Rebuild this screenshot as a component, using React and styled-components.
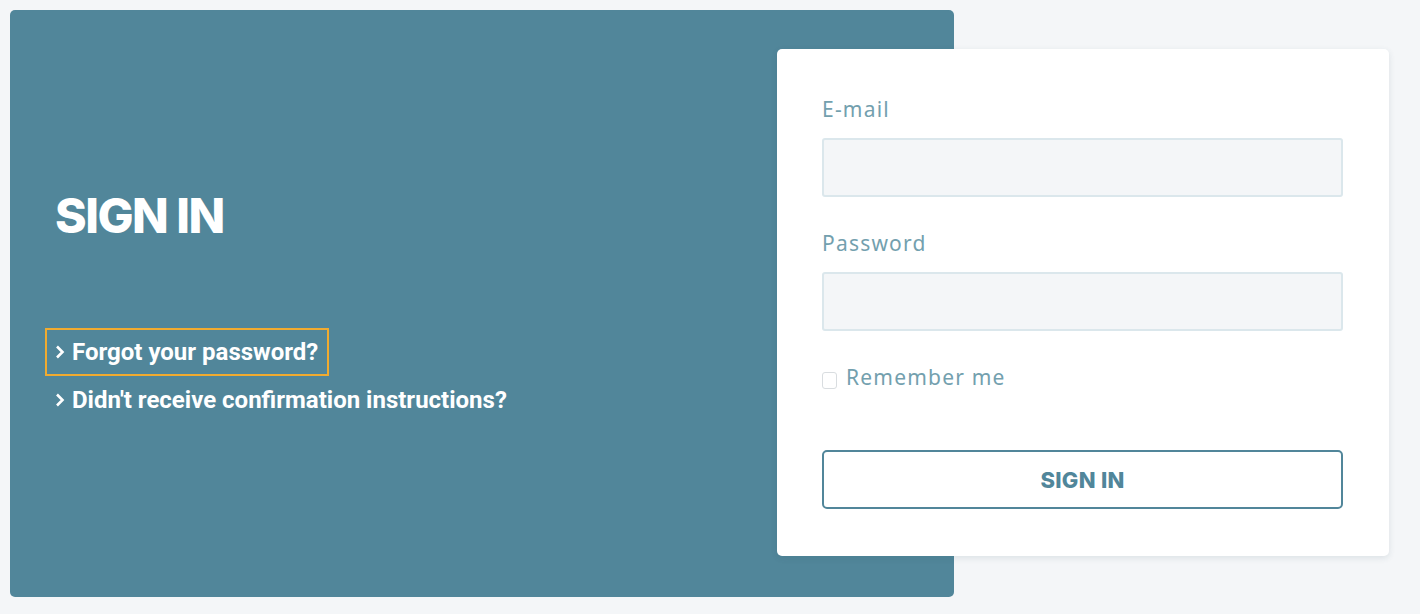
import React, { useState } from "react";
import styled, { createGlobalStyle } from "styled-components";

const GlobalStyle = createGlobalStyle`
  html, body {
    margin: 0;
    background: #f4f6f8;
  }
  * { box-sizing: border-box; }
`;

const Page = styled.div`
  display: flex;
  align-items: flex-start;
  padding: 10px;
  height: 614px;
`;

const Hero = styled.section`
  width: 944px;
  height: 587px;
  flex-shrink: 0;
  background: #51869a;
  border-radius: 5px;
  padding: 178px 0 0 45px;
  display: flex;
  flex-direction: column;
`;

const Title = styled.h1`
  margin: 0 0 84px;
  font-family: Inter, "Noto Sans", sans-serif;
  font-weight: 800;
  font-size: 48px;
  line-height: 56px;
  letter-spacing: -1.5px;
  color: #fff;
`;

const HelpLink = styled.a`
  align-self: flex-start;
  display: inline-flex;
  align-items: center;
  gap: 7px;
  padding: 10px 11px 10px 10px;
  margin-left: -10px;
  font-family: Roboto, "Liberation Sans", sans-serif;
  font-weight: 700;
  font-size: 24px;
  line-height: 28px;
  color: #fff;
  text-decoration: none;
  outline: ${(p) => (p.$focused ? "2px solid #f1ab30" : "none")};
  outline-offset: -2px;
`;

const Chevron = () => (
  <svg width="10" height="14" viewBox="0 0 10 14" aria-hidden="true">
    <path d="M2 1.5 L7.5 7 L2 12.5" fill="none" stroke="#fff" strokeWidth="2.6" />
  </svg>
);

const Card = styled.form`
  width: 612px;
  height: 507px;
  flex-shrink: 0;
  margin: 39px 0 0 -177px;
  background: #fff;
  border-radius: 5px;
  box-shadow: 0 2px 6px rgba(40, 70, 90, 0.12);
  padding: 40px 46px 0 45px;
  display: flex;
  flex-direction: column;
`;

const Label = styled.label`
  font-family: "Noto Sans", sans-serif;
  font-size: 21px;
  line-height: 40px;
  letter-spacing: 1.2px;
  color: #73a0ae;
`;

const Field = styled.input`
  display: block;
  width: 100%;
  height: 59px;
  margin: 9px 0 ${(p) => p.$gap}px;
  background: #f4f6f8;
  border: 2px solid #dbe7ec;
  border-radius: 3px;
  font-size: 18px;
  padding: 0 14px;
  outline: none;
`;

const CheckRow = styled.label`
  display: flex;
  align-items: center;
  gap: 9px;
  font-family: "Noto Sans", sans-serif;
  font-size: 21px;
  line-height: 30px;
  letter-spacing: 1.2px;
  color: #73a0ae;
`;

const Box = styled.input`
  appearance: none;
  width: 15px;
  height: 17px;
  margin: 6px 0 0;
  border: 1px solid #d9dde0;
  border-radius: 3px;
  background: #fff;
`;

const SubmitButton = styled.button`
  margin-top: 58px;
  width: 100%;
  height: 59px;
  background: #fff;
  border: 2px solid #51869a;
  border-radius: 5px;
  font-family: Inter, "Noto Sans", sans-serif;
  font-weight: 800;
  font-size: 22px;
  letter-spacing: 0.3px;
  color: #51869a;
  cursor: pointer;
`;

export default function App() {
  const [email, setEmail] = useState("");
  const [password, setPassword] = useState("");
  const [remember, setRemember] = useState(false);

  return (
    <>
      <GlobalStyle />
      <Page>
        <Hero>
          <Title>SIGN IN</Title>
          <HelpLink href="#" $focused>
            <Chevron />
            Forgot your password?
          </HelpLink>
          <HelpLink href="#">
            <Chevron />
            Didn't receive confirmation instructions?
          </HelpLink>
        </Hero>
        <Card onSubmit={(e) => e.preventDefault()}>
          <Label htmlFor="email">E-mail</Label>
          <Field
            id="email"
            type="email"
            value={email}
            onChange={(e) => setEmail(e.target.value)}
            $gap={26}
          />
          <Label htmlFor="password">Password</Label>
          <Field
            id="password"
            type="password"
            value={password}
            onChange={(e) => setPassword(e.target.value)}
            $gap={31}
          />
          <CheckRow>
            <Box
              type="checkbox"
              checked={remember}
              onChange={(e) => setRemember(e.target.checked)}
            />
            Remember me
          </CheckRow>
          <SubmitButton type="submit">SIGN IN</SubmitButton>
        </Card>
      </Page>
    </>
  );
}
